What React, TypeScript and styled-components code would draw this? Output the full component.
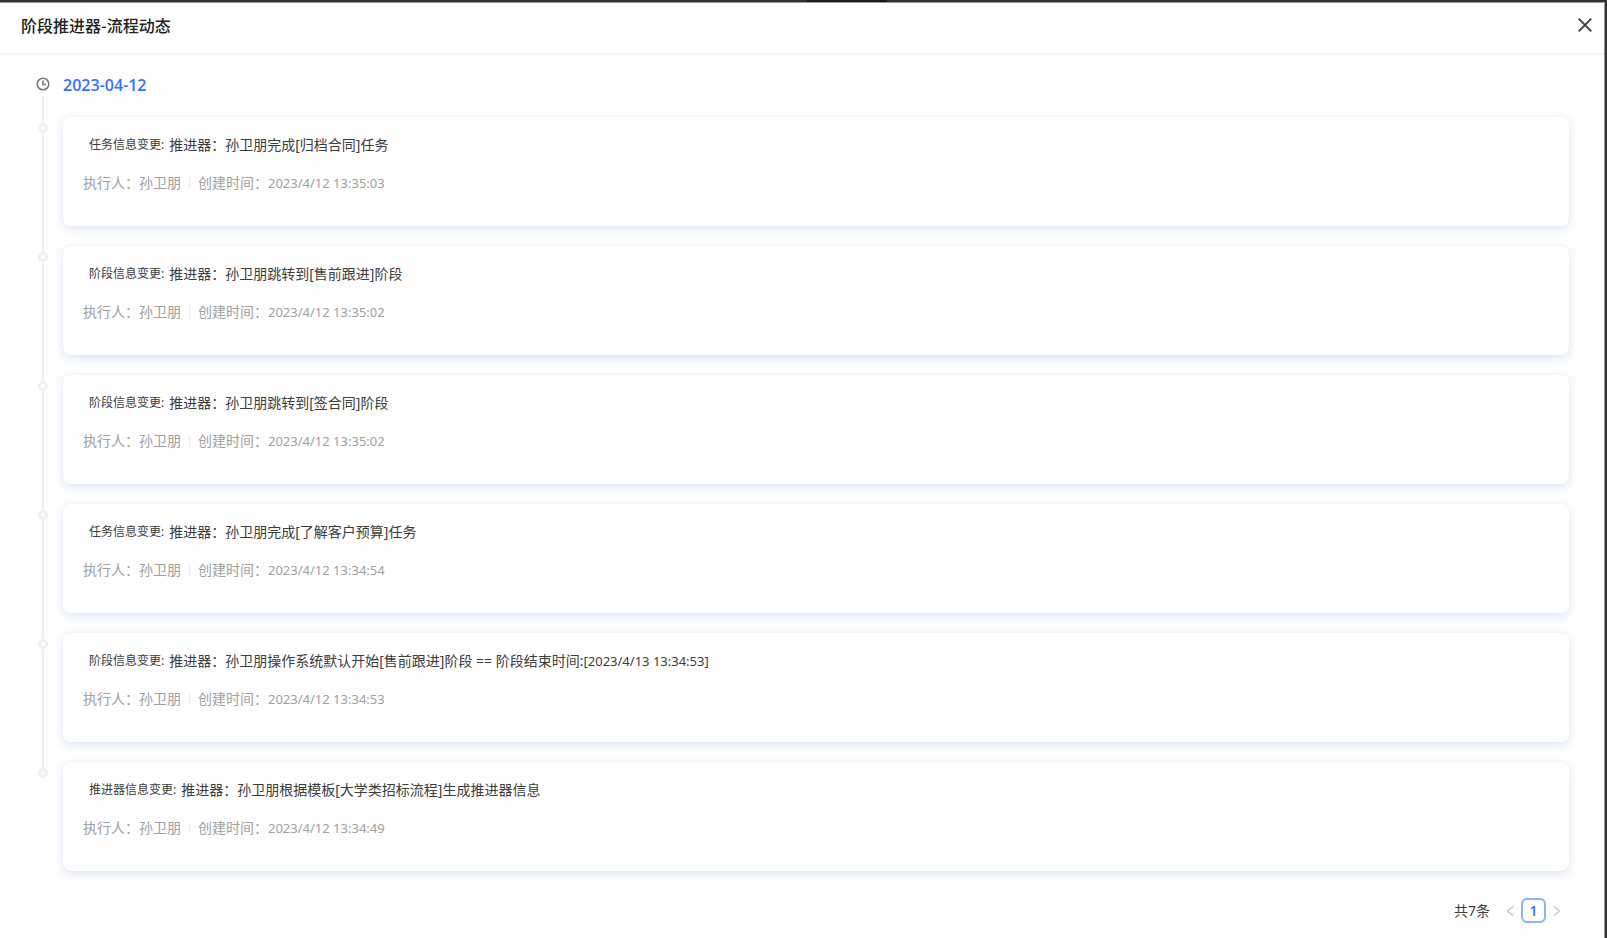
import React from 'react';
import styled, { createGlobalStyle } from 'styled-components';

const GlobalStyle = createGlobalStyle`
  * { box-sizing: border-box; }
  body {
    margin: 0;
    background: #333;
    color: #3c3c3c;
    font-family: "Noto Sans", "Noto Sans CJK SC", sans-serif;
    font-size: 14px;
    line-height: 22px;
  }
`;

const Backdrop = styled.div`
  display: flex;
  flex-direction: column;
  min-height: 100vh;
  padding-right: 2px;
  background: #333131;
`;

const TopEdge = styled.div`
  display: flex;
  justify-content: center;
  height: 2px;
  padding-left: 88px;
`;

const TopTab = styled.span`
  width: 80px;
  background: #1b1919;
`;

const Drawer = styled.section`
  flex: 1;
  display: flex;
  flex-direction: column;
  border-top: 1px solid #999;
  border-right: 1px solid #999;
  background: #fefefe;
`;

const Header = styled.header`
  display: flex;
  align-items: center;
  justify-content: space-between;
  height: 52px;
  padding: 0 11px 6px 21px;
  border-bottom: 2px solid #f4f5f5;
`;

const Title = styled.h1`
  margin: 0;
  font-family: "Noto Sans CJK SC", sans-serif;
  font-size: 16px;
  font-weight: 500;
  line-height: 22px;
  color: #222;
`;

const CloseButton = styled.button`
  display: flex;
  padding: 0;
  border: 0;
  background: none;
  color: #3a3a3a;
  cursor: pointer;
`;

const Body = styled.main`
  padding: 19px 35px 16px;
`;

const Row = styled.div`
  display: grid;
  grid-template-columns: 15px 1fr;
  column-gap: 13px;
`;

const DateRow = styled(Row)`
  height: 42px;
`;

const Rail = styled.div`
  display: flex;
  flex-direction: column;
  align-items: center;
`;

const Clock = styled.svg`
  margin: 3px 0 5px;
  flex: none;
`;

const Line = styled.span<{ $length?: number }>`
  width: 2px;
  flex: ${(p) => (p.$length ? `0 0 ${p.$length}px` : '1')};
  background: #f0f0f0;
`;

const Dot = styled.span`
  flex: none;
  width: 10px;
  height: 10px;
  border: 3px solid #f0f0f0;
  border-radius: 50%;
  background: #fff;
`;

const DateHeading = styled.h2`
  margin: 0;
  font-family: "Open Sans", "Noto Sans", sans-serif;
  font-size: 16px;
  font-weight: 600;
  line-height: 22px;
  color: #3470ff;
`;

const List = styled.ol`
  margin: 0;
  padding: 0;
  list-style: none;
`;

const CardSlot = styled.div<{ $last: boolean }>`
  min-width: 0;
  padding-bottom: ${(p) => (p.$last ? 0 : 19)}px;
`;

const Card = styled.article`
  padding: 17px 20px 32px;
  border-top: 1px solid #f3f5f6;
  border-radius: 8px;
  background: #fefefe;
  box-shadow: 0 3px 8px rgba(70, 110, 200, 0.18);
`;

const Event = styled.p`
  display: flex;
  align-items: center;
  gap: 5px;
  height: 22px;
  margin: 0 0 16px;
  padding-left: 6px;
`;

const Kind = styled.span`
  font-size: 12px;
`;

const Meta = styled.p`
  display: flex;
  align-items: center;
  height: 22px;
  margin: 0;
  color: #a0a0a0;
`;

const Divider = styled.span`
  width: 1px;
  height: 12px;
  margin: 0 8px;
  background: #ececec;
`;

const Stamp = styled.span`
  font-family: "Noto Sans", sans-serif;
  font-size: 13px;
  line-height: 16px;
`;

const Pagination = styled.nav`
  display: flex;
  align-items: center;
  justify-content: flex-end;
  margin-top: 27px;
  padding-right: 8px;
`;

const Total = styled.span`
  margin-right: 16px;
`;

const Arrow = styled.button`
  display: flex;
  padding: 0;
  border: 0;
  background: none;
  color: #c4c4c4;
`;

const PageButton = styled.button`
  width: 25px;
  height: 25px;
  margin: 0 7px;
  padding: 0;
  border: 2px solid #86b4ff;
  border-radius: 6px;
  background: #fff;
  color: #3470ff;
  font: 600 14px/20px "Open Sans", sans-serif;
`;

interface Entry {
  kind: string;
  text: string;
  tail?: string;
  time: string;
}

const entries: Entry[] = [
  { kind: '任务信息变更', text: '孙卫朋完成[归档合同]任务', time: '2023/4/12 13:35:03' },
  { kind: '阶段信息变更', text: '孙卫朋跳转到[售前跟进]阶段', time: '2023/4/12 13:35:02' },
  { kind: '阶段信息变更', text: '孙卫朋跳转到[签合同]阶段', time: '2023/4/12 13:35:02' },
  { kind: '任务信息变更', text: '孙卫朋完成[了解客户预算]任务', time: '2023/4/12 13:34:54' },
  {
    kind: '阶段信息变更',
    text: '孙卫朋操作系统默认开始[售前跟进]阶段 == 阶段结束时间:',
    tail: '[2023/4/13 13:34:53]',
    time: '2023/4/12 13:34:53',
  },
  { kind: '推进器信息变更', text: '孙卫朋根据模板[大学类招标流程]生成推进器信息', time: '2023/4/12 13:34:49' },
];

const Chevron = ({ d }: { d: string }) => (
  <svg width="8" height="12" viewBox="0 0 8 12" fill="none" stroke="currentColor" strokeWidth="1.3">
    <path d={d} />
  </svg>
);

export default function App() {
  return (
    <>
      <GlobalStyle />
      <Backdrop>
        <TopEdge>
          <TopTab />
        </TopEdge>
        <Drawer>
          <Header>
            <Title>阶段推进器-流程动态</Title>
            <CloseButton aria-label="关闭">
              <svg width="16" height="16" viewBox="0 0 16 16" fill="none" stroke="currentColor" strokeWidth="1.8">
                <path d="M1.7 1.7 14.3 14.3M14.3 1.7 1.7 14.3" />
              </svg>
            </CloseButton>
          </Header>
          <Body>
            <DateRow>
              <Rail>
                <Clock width="14" height="14" viewBox="0 0 14 14" fill="none" stroke="#777" strokeWidth="1.5">
                  <circle cx="7" cy="7" r="5.8" />
                  <path d="M7 3.6V7.4H10" />
                </Clock>
                <Line />
              </Rail>
              <DateHeading>2023-04-12</DateHeading>
            </DateRow>
            <List>
              {entries.map((e, i) => {
                const last = i === entries.length - 1;
                return (
                  <Row as="li" key={i}>
                    <Rail>
                      <Line $length={7} />
                      <Dot />
                      {!last && <Line />}
                    </Rail>
                    <CardSlot $last={last}>
                      <Card>
                        <Event>
                          <Kind>{e.kind}:</Kind>
                          <span>
                            推进器：{e.text}
                            {e.tail && <Stamp>{e.tail}</Stamp>}
                          </span>
                        </Event>
                        <Meta>
                          <span>执行人：孙卫朋</span>
                          <Divider />
                          <span>创建时间：</span>
                          <Stamp as="time">{e.time}</Stamp>
                        </Meta>
                      </Card>
                    </CardSlot>
                  </Row>
                );
              })}
            </List>
            <Pagination aria-label="分页">
              <Total>共7条</Total>
              <Arrow aria-label="上一页" disabled>
                <Chevron d="M7 1.5 1.5 6 7 10.5" />
              </Arrow>
              <PageButton aria-current="page">1</PageButton>
              <Arrow aria-label="下一页" disabled>
                <Chevron d="M1 1.5 6.5 6 1 10.5" />
              </Arrow>
            </Pagination>
          </Body>
        </Drawer>
      </Backdrop>
    </>
  );
}
